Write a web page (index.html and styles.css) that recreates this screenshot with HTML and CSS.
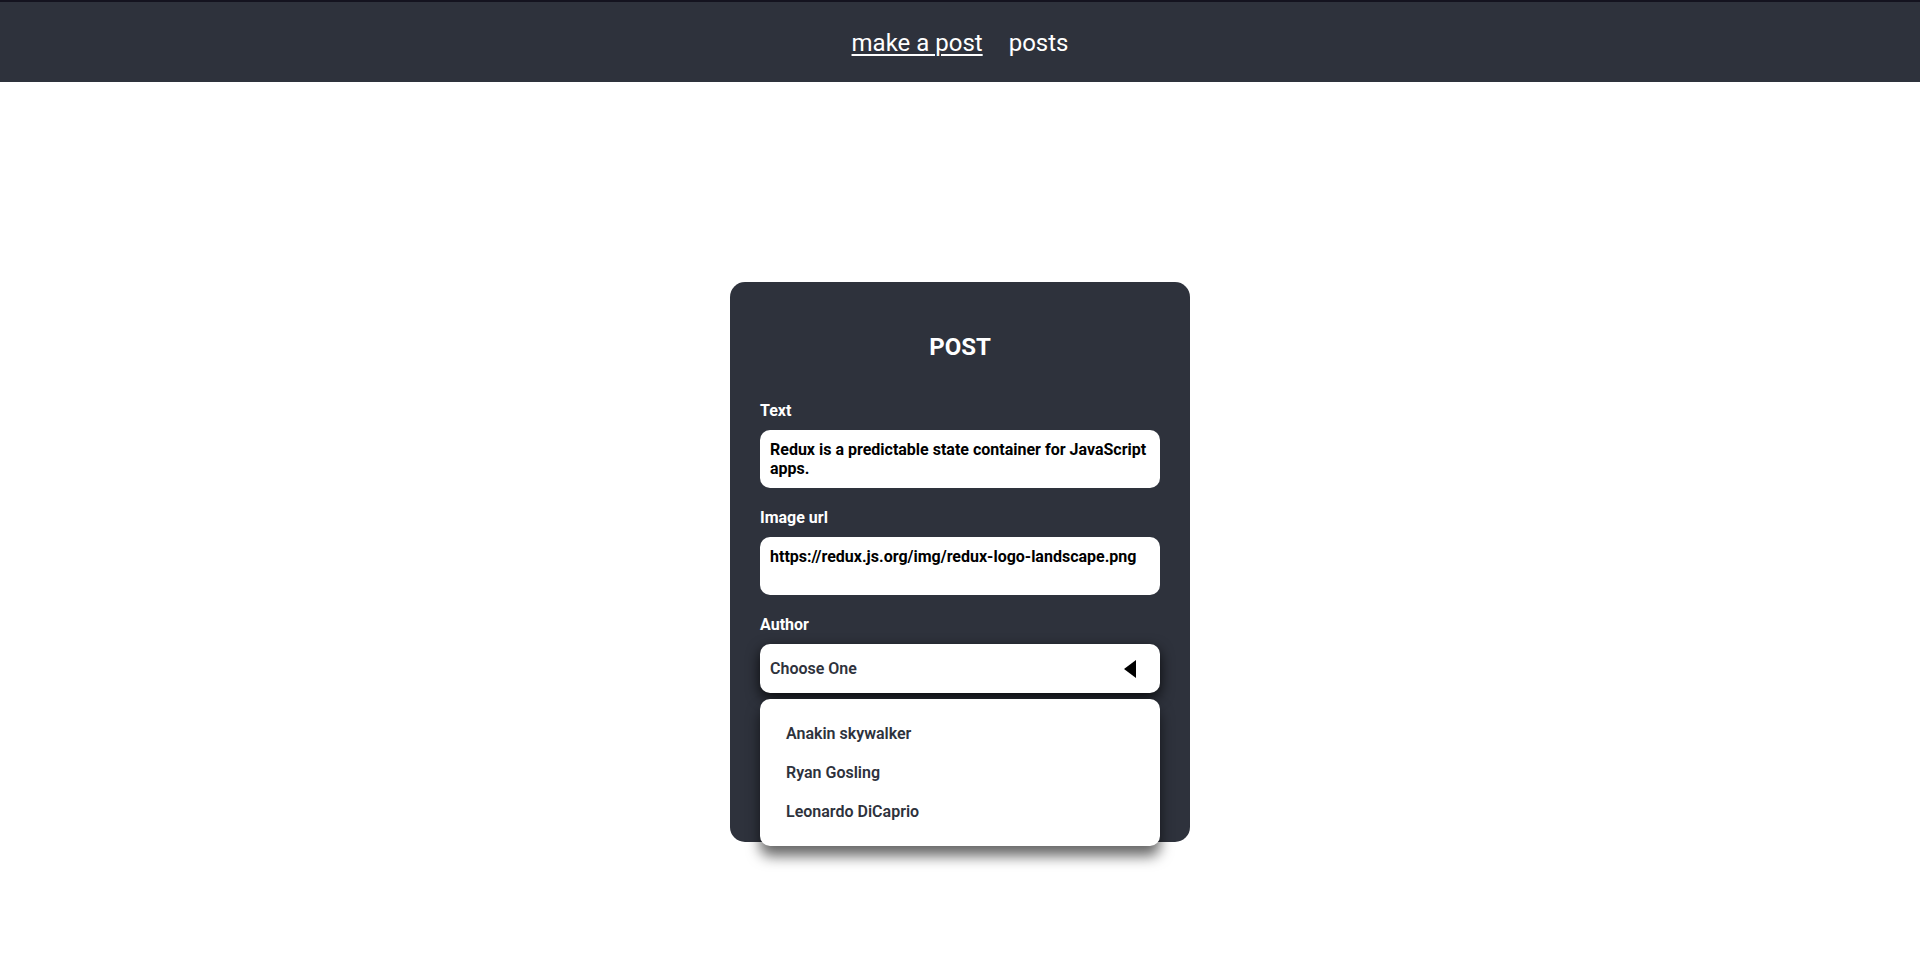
FILE: index.html
```html
<!DOCTYPE html>
<html lang="en">
<head>
<meta charset="utf-8">
<title>make a post</title>
<link rel="stylesheet" href="styles.css">
</head>
<body>
<header class="topbar">
  <nav class="nav">
    <a class="nav-link active" href="#">make a post</a>
    <a class="nav-link" href="#">posts</a>
  </nav>
</header>
<main class="main">
  <form class="card">
    <h2 class="card-title">POST</h2>
    <div class="field">
      <label class="label" for="text">Text</label>
      <textarea id="text" class="input" rows="2">Redux is a predictable state container for JavaScript apps.</textarea>
    </div>
    <div class="field">
      <label class="label" for="img">Image url</label>
      <textarea id="img" class="input" rows="2">https://redux.js.org/img/redux-logo-landscape.png</textarea>
    </div>
    <div class="field">
      <span class="label">Author</span>
      <div class="select">
        <span class="select-value">Choose One</span>
        <span class="caret"></span>
      </div>
      <ul class="options">
        <li class="option">Anakin skywalker</li>
        <li class="option">Ryan Gosling</li>
        <li class="option">Leonardo DiCaprio</li>
      </ul>
    </div>
  </form>
</main>
</body>
</html>
```
FILE: styles.css
```css
* { box-sizing: border-box; }
html, body {
  margin: 0;
  padding: 0;
  background: #ffffff;
  font-family: Roboto, "Liberation Sans", Arial, sans-serif;
}
.topbar {
  height: 82px;
  background: #2e323c;
  border-top: 2px solid #14131f;
  display: flex;
  align-items: center;
  justify-content: center;
}
.nav {
  display: flex;
  gap: 26px;
  padding-top: 2px;
}
.nav-link {
  color: #ffffff;
  font-size: 24px;
  line-height: 28px;
  text-decoration: none;
}
.nav-link.active {
  text-decoration: underline;
  text-underline-offset: 3px;
  text-decoration-thickness: 2px;
}
.main {
  padding-top: 200px;
  padding-bottom: 80px;
}
.card {
  width: 460px;
  margin: 0 auto;
  background: #2e323c;
  border-radius: 15px;
  padding: 31px 30px 0;
  display: flex;
  flex-direction: column;
}
.card-title {
  margin: 20px 0;
  text-align: center;
  color: #ffffff;
  font-size: 24px;
  font-weight: 700;
  line-height: normal;
}
.field {
  margin-top: 20px;
  display: flex;
  flex-direction: column;
}
.label {
  display: block;
  color: #ffffff;
  font-size: 16px;
  font-weight: 700;
  line-height: normal;
  margin-bottom: 10px;
}
.input {
  display: block;
  width: 400px;
  height: 58px;
  border: none;
  outline: none;
  resize: none;
  overflow: hidden;
  border-radius: 10px;
  background: #ffffff;
  padding: 10px;
  margin: 0;
  font-family: Roboto, "Liberation Sans", Arial, sans-serif;
  font-size: 16px;
  font-weight: 700;
  line-height: 19px;
  color: #000000;
}
.select {
  height: 49px;
  background: #ffffff;
  border-radius: 10px;
  padding: 0 10px;
  display: flex;
  align-items: center;
  justify-content: space-between;
  box-shadow: 0 5px 14px rgba(0, 0, 0, 0.8);
}
.select-value {
  font-size: 16px;
  font-weight: 600;
  color: #2e323c;
}
.caret {
  width: 0;
  height: 0;
  border-top: 9px solid transparent;
  border-bottom: 9px solid transparent;
  border-right: 12px solid #000000;
  margin-right: 14px;
}
.options {
  margin: 6px 0 -4px;
  padding: 15px 0;
  list-style: none;
  background: #ffffff;
  border-radius: 10px;
  box-shadow: 0 10px 14px rgba(0, 0, 0, 0.6);
}
.option {
  padding: 10px 26px;
  font-size: 16px;
  font-weight: 600;
  line-height: normal;
  color: #2e323c;
}
```
